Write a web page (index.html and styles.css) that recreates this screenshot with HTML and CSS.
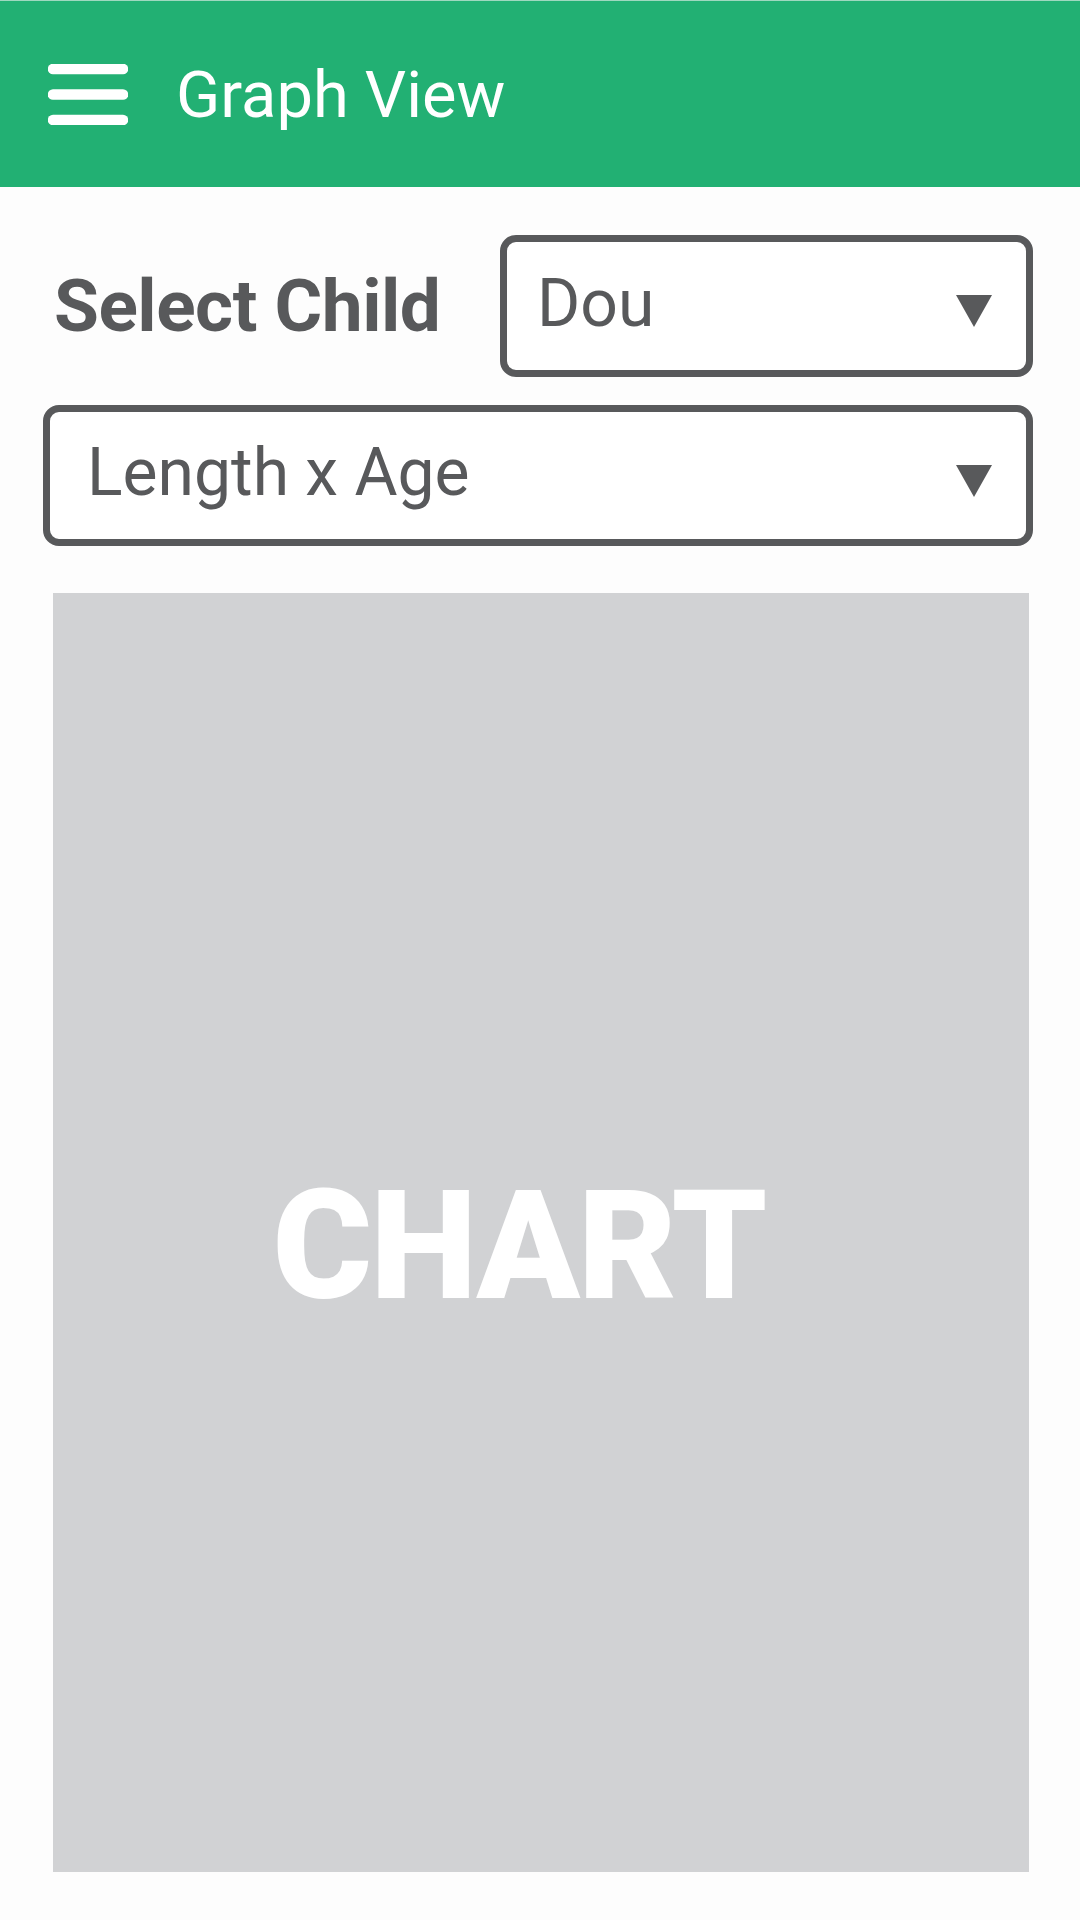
FILE: index.html
```html
<!DOCTYPE html>
<html lang="en">
<head>
  <meta charset="UTF-8">
  <title>Graph View</title>
  <link rel="stylesheet" href="styles.css">
</head>
<body>
  <header class="topbar">
    <svg class="menu-icon" width="80" height="61" viewBox="0 0 80 61">
      <line x1="5" y1="5" x2="75" y2="5" />
      <line x1="5" y1="30.5" x2="75" y2="30.5" />
      <line x1="5" y1="56" x2="75" y2="56" />
    </svg>
    <h1>Graph View</h1>
  </header>

  <main class="content">
    <div class="child-row">
      <label class="child-label">Select Child</label>
      <div class="dropdown dropdown-child">
        <span class="dropdown-text">Dou</span>
        <svg class="caret" width="36" height="32" viewBox="0 0 36 32"><polygon points="0,0 36,0 18,32" /></svg>
      </div>
    </div>

    <div class="dropdown dropdown-graph">
      <span class="dropdown-text">Length x Age</span>
      <svg class="caret" width="36" height="32" viewBox="0 0 36 32"><polygon points="0,0 36,0 18,32" /></svg>
    </div>

    <section class="chart">
      <span>CHART</span>
    </section>
  </main>
</body>
</html>
```

FILE: styles.css
```css
body {
  font-family: Roboto, 'Liberation Sans', sans-serif;
  margin: 0;
  padding: 0;
  background: #fdfdfd;
  color: #58595b;
}

.topbar {
  display: flex;
  align-items: center;
  height: 186px;
  border-top: 1px solid #9fd8bf;
  background-color: #22b073;
  padding-left: 48px;
}

.menu-icon line {
  stroke: #fff;
  stroke-width: 10.5;
  stroke-linecap: round;
}

.topbar h1 {
  margin: 2px 0 0 48px;
  font-size: 65px;
  font-weight: 400;
  color: white;
}

.content {
  padding: 48px 47px 0 43px;
}

.child-row {
  display: flex;
  align-items: center;
  margin-bottom: 28px;
}

.child-label {
  margin-left: 11px;
  font-size: 73px;
  font-weight: 700;
  letter-spacing: -0.5px;
}

.dropdown {
  display: flex;
  align-items: center;
  justify-content: space-between;
  box-sizing: border-box;
  height: 142px;
  border: 7px solid #58595b;
  border-radius: 16px;
  background: white;
  padding-right: 34px;
}

.dropdown-child {
  width: 533px;
  margin-left: auto;
  padding-left: 30px;
}

.dropdown-graph {
  height: 141px;
  padding-left: 37px;
}

.dropdown-text {
  font-size: 66px;
  margin-bottom: 6px;
}

.caret {
  margin-top: 10px;
  fill: #58595b;
}

.chart {
  display: flex;
  align-items: center;
  justify-content: center;
  box-sizing: border-box;
  margin: 47px 4px 0 10px;
  height: 1279px;
  background: #d1d2d4;
  padding: 26px 44px 0 0;
}

.chart span {
  font-size: 152px;
  font-weight: 900;
  color: white;
  letter-spacing: -2px;
}
```
